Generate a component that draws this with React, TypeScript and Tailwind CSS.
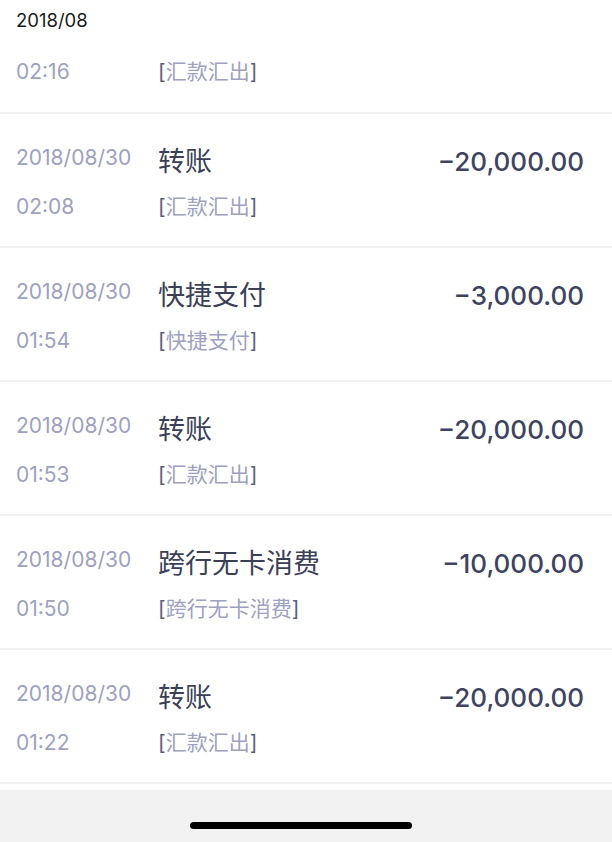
const rows = [
  { date: '2018/08/30', time: '02:08', title: '转账', sub: '汇款汇出', amount: '−20,000.00' },
  { date: '2018/08/30', time: '01:54', title: '快捷支付', sub: '快捷支付', amount: '−3,000.00' },
  { date: '2018/08/30', time: '01:53', title: '转账', sub: '汇款汇出', amount: '−20,000.00' },
  { date: '2018/08/30', time: '01:50', title: '跨行无卡消费', sub: '跨行无卡消费', amount: '−10,000.00' },
  { date: '2018/08/30', time: '01:22', title: '转账', sub: '汇款汇出', amount: '−20,000.00' },
];

const font = { fontFamily: 'Inter, "Noto Sans CJK SC", sans-serif' };

function Sub({ text }: { text: string }) {
  return (
    <span className="text-[21px] leading-6 text-[#9ea1c0]">
      <span className="text-[#5b607a]">[</span>
      {text}
      <span className="text-[#5b607a]">]</span>
    </span>
  );
}

function Row({ r }: { r: (typeof rows)[number] }) {
  return (
    <div className="grid h-[134px] grid-cols-[142px_1fr_auto] grid-rows-[32px_24px] gap-y-[17px] border-b-2 border-[#f1f1f3] pl-4 pr-7 pt-8">
      <div className="text-[21px] leading-6 text-[#9ea1c0]">{r.date}</div>
      <div className="text-[27px] leading-8 text-[#3b4057]">{r.title}</div>
      <div className="text-[26px] font-medium leading-8 text-[#3e445f]">{r.amount}</div>
      <div className="text-[21px] leading-6 text-[#9ea1c0]">{r.time}</div>
      <div>
        <Sub text={r.sub} />
      </div>
    </div>
  );
}

export default function App() {
  return (
    <div className="flex h-[842px] w-[612px] flex-col overflow-hidden bg-white" style={font}>
      <div className="flex h-[44px] items-start pl-4 pt-[8px] text-[18.5px] leading-6 text-[#1a1a1a]">2018/08</div>
      <div className="grid h-[70px] grid-cols-[142px_1fr] border-b-2 border-[#f1f1f3] pl-4 pt-4">
        <div className="text-[21px] leading-6 text-[#9ea1c0]">02:16</div>
        <div>
          <Sub text="汇款汇出" />
        </div>
      </div>
      {rows.map((r, i) => (
        <Row key={i} r={r} />
      ))}
      <div className="mt-[6px] flex flex-1 items-start justify-center bg-[#f2f2f2] pr-[10px] pt-[32px]">
        <div className="h-[7px] w-[222px] rounded-full bg-black" />
      </div>
    </div>
  );
}
